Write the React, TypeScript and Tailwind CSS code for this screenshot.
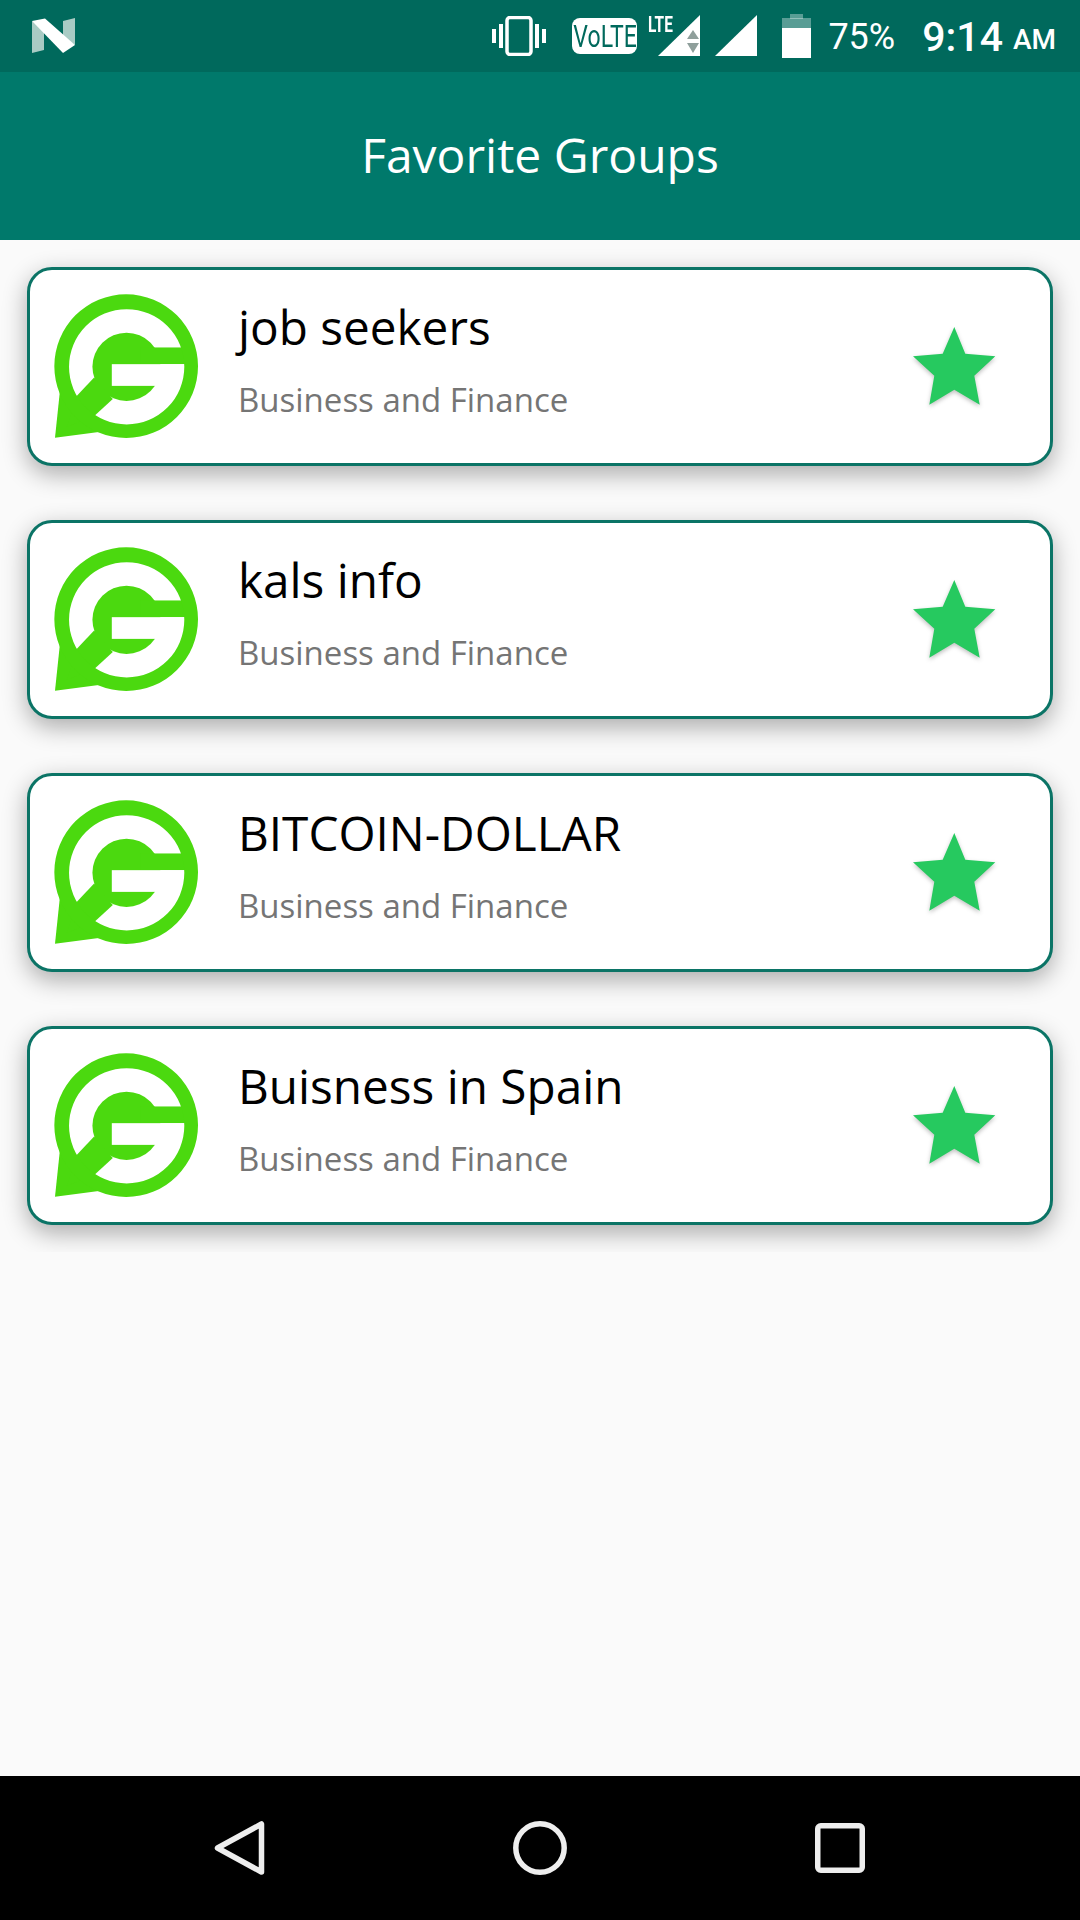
const GROUPS = ["job seekers", "kals info", "BITCOIN-DOLLAR", "Buisness in Spain"];

function GroupLogo() {
  return (
    <svg viewBox="162 162 431 431" className="-mt-[2px] h-[144px] w-[144px] shrink-0">
      {/* tail */}
      <polygon points="181,440 165,592 296,575" fill="#4bd90f" />
      {/* inner G */}
      <circle cx="379" cy="380" r="102" fill="#4bd90f" />
      <rect x="420" y="322" width="140" height="50" fill="#4bd90f" />
      <polygon points="282,412 232,465 200,560 285,525 338,476" fill="#4bd90f" />
      <rect x="335" y="372" width="225" height="65" fill="#fff" />
      {/* ring, thicker at the top */}
      <path
        fillRule="evenodd"
        d="M163 378a215 215 0 1 0 430 0a215 215 0 1 0 -430 0ZM207 380a172.5 172.5 0 1 0 345 0a172.5 172.5 0 1 0 -345 0Z"
        fill="#4bd90f"
      />
    </svg>
  );
}

function Star() {
  return (
    <svg viewBox="0 0 84 80" className="h-[80px] w-[84px] drop-shadow-[0_2px_2px_rgba(0,0,0,0.25)]">
      <polygon points="41.3,0 52.3,26.7 82.3,29.3 61.3,48.7 66.7,77.7 41.3,62.7 16.3,77.7 21.3,48.7 0,29.3 29.7,26.7" fill="#26c95f" />
    </svg>
  );
}

function GroupCard({ name }: { name: string }) {
  return (
    <div className="flex h-[199px] items-center rounded-[25px] border-[3px] border-[#0b7466] bg-white pl-[24px] pr-[53px] shadow-[0_8px_24px_rgba(0,0,0,0.32)]">
      <GroupLogo />
      <div className="ml-[40px] flex-1 pb-[16px]">
        <div className="text-[47.7px] leading-[62px] text-black">{name}</div>
        <div className="mt-[20px] text-[33px] leading-[44px] text-[#757575]">Business and Finance</div>
      </div>
      <Star />
    </div>
  );
}

function StatusBar() {
  return (
    <div className="flex h-[72px] items-center bg-[#00695c] pl-[32px] pr-[24px] text-white">
      {/* N logo */}
      <svg viewBox="0 0 43 36" className="h-[36px] w-[43px]">
        <polygon points="0,3 12,10 12,32 0,35" fill="#a9cbc4" />
        <polygon points="31,3 43,0 43,27 31,20" fill="#a9cbc4" />
        <polygon points="0,3 13,0.5 43,27 31,35" fill="#fff" />
      </svg>

      <div className="ml-auto flex items-center">
        {/* vibrate */}
        <svg viewBox="0 0 54 40" className="h-[40px] w-[54px]">
          <rect x="0" y="13" width="4" height="14" fill="#fff" />
          <rect x="7" y="8" width="4" height="24" fill="#fff" />
          <rect x="15" y="1.5" width="24" height="37" rx="3" fill="none" stroke="#fff" strokeWidth="3.5" />
          <rect x="43" y="8" width="4" height="24" fill="#fff" />
          <rect x="50" y="13" width="4" height="14" fill="#fff" />
        </svg>

        <div className="ml-[26px] flex h-[36px] w-[65px] items-center justify-center overflow-hidden rounded-[8px] bg-white">
          <span className="scale-x-[0.72] font-['Roboto',sans-serif] text-[32px] leading-none text-[#00695c]">VoLTE</span>
        </div>

        {/* LTE signal */}
        <div className="relative ml-[21px] h-[42px] w-[42px]">
          <svg viewBox="0 0 42 42" className="h-[42px] w-[42px]">
            <polygon points="0,41 42,0 42,41" fill="#fff" />
            <polygon points="35,15 41,24 29,24" fill="#8f9f9b" />
            <polygon points="35,38 41,28 29,28" fill="#8f9f9b" />
          </svg>
          <span className="absolute left-[-10px] top-[-1px] origin-top-left scale-x-[0.7] font-['Roboto',sans-serif] text-[22px] font-bold leading-[22px] text-white">
            LTE
          </span>
        </div>

        {/* signal */}
        <svg viewBox="0 0 42 42" className="ml-[15px] h-[42px] w-[42px]">
          <polygon points="0,41 42,0 42,41" fill="#fff" />
        </svg>

        {/* battery */}
        <svg viewBox="0 0 29 44" className="ml-[25px] h-[44px] w-[29px]">
          <rect x="8" y="0" width="13" height="5" fill="#fff" fillOpacity="0.35" />
          <rect x="0" y="4" width="29" height="10" fill="#fff" fillOpacity="0.35" />
          <rect x="0" y="14" width="29" height="30" fill="#fff" />
        </svg>

        <span className="ml-[17px] mt-[2px] font-['Roboto',sans-serif] text-[36px] leading-none">75%</span>
        <span className="ml-[27px] mt-[2px] font-['Roboto',sans-serif] text-[41px] font-medium leading-none">9:14</span>
        <span className="ml-[10px] mt-[8px] font-['Roboto',sans-serif] text-[28px] font-medium leading-none">AM</span>
      </div>
    </div>
  );
}

function NavBar() {
  return (
    <div className="flex h-[144px] items-center bg-black pl-[214px]">
      <svg viewBox="0 0 51 54" className="h-[54px] w-[51px]">
        <path d="M47.5 3 L47.5 51 L3.5 27 Z" fill="none" stroke="#eee" strokeWidth="5.5" strokeLinejoin="round" />
      </svg>
      <svg viewBox="0 0 54 54" className="ml-[248px] h-[54px] w-[54px]">
        <circle cx="27" cy="27" r="24.2" fill="none" stroke="#eee" strokeWidth="5.5" />
      </svg>
      <svg viewBox="0 0 50 50" className="ml-[248px] h-[50px] w-[50px]">
        <rect x="2.75" y="2.75" width="44.5" height="44.5" rx="3" fill="none" stroke="#eee" strokeWidth="5.5" />
      </svg>
    </div>
  );
}

export default function App() {
  return (
    <div className="flex h-[1920px] w-[1080px] flex-col bg-[#fafafa] font-['Open_Sans',sans-serif]">
      <StatusBar />
      <div className="flex h-[168px] items-center justify-center bg-[#00796b] pb-[2px] text-[48px] text-white">
        Favorite Groups
      </div>
      <div className="flex-1">
        <div className="flex flex-col gap-[54px] overflow-hidden px-[27px] py-[27px]">
          {GROUPS.map((g) => (
            <GroupCard key={g} name={g} />
          ))}
        </div>
      </div>
      <NavBar />
    </div>
  );
}
